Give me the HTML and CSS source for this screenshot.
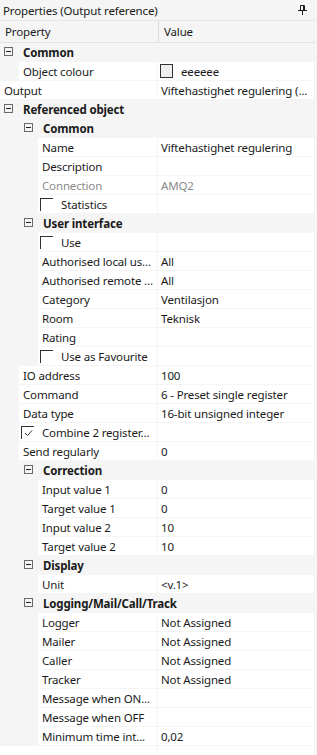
FILE: index.html
```html
<!DOCTYPE html>
<html>
<head>
<meta charset="utf-8">
<link rel="stylesheet" href="styles.css">
</head>
<body>
<div class="panel">
  <div class="titlebar">
    <span class="title">Properties (Output reference)</span>
    <svg class="pin" width="9" height="10" viewBox="0 0 9 10"><path d="M2.5 0.5h4v5h-4z M5.5 0.5v5" fill="none" stroke="#1e1e1e" stroke-width="1"/><path d="M0 5.5h9M4.5 5.5v4.5" stroke="#1e1e1e" stroke-width="1"/></svg>
  </div>
  <div class="header">
    <div class="hcell hname">Property</div>
    <div class="hcell hvalue">Value</div>
  </div>
  <div class="grid">
    <div class="row cat l0"><span class="box"></span><span class="ctext">Common</span></div>
    <div class="row"><div class="name i1"><span class="lbl">Object colour</span></div><div class="value"><span class="swatch"></span><span class="sw-text">eeeeee</span></div></div>
    <div class="row"><div class="name i0"><span class="lbl">Output</span></div><div class="value">Viftehastighet regulering (...</div></div>
    <div class="row cat l0"><span class="box"></span><span class="ctext">Referenced object</span></div>
    <div class="row cat l1"><span class="box"></span><span class="ctext">Common</span></div>
    <div class="row"><div class="name i2"><span class="lbl">Name</span></div><div class="value">Viftehastighet regulering</div></div>
    <div class="row"><div class="name i2"><span class="lbl">Description</span></div><div class="value"></div></div>
    <div class="row"><div class="name i2"><span class="lbl dis">Connection</span></div><div class="value dis">AMQ2</div></div>
    <div class="row"><div class="name i2"><span class="lbl chk"><span class="cb"></span>Statistics</span></div><div class="value"></div></div>
    <div class="row cat l1"><span class="box"></span><span class="ctext">User interface</span></div>
    <div class="row"><div class="name i2"><span class="lbl chk"><span class="cb"></span>Use</span></div><div class="value"></div></div>
    <div class="row"><div class="name i2"><span class="lbl">Authorised local us...</span></div><div class="value">All</div></div>
    <div class="row"><div class="name i2"><span class="lbl">Authorised remote ...</span></div><div class="value">All</div></div>
    <div class="row"><div class="name i2"><span class="lbl">Category</span></div><div class="value">Ventilasjon</div></div>
    <div class="row"><div class="name i2"><span class="lbl">Room</span></div><div class="value">Teknisk</div></div>
    <div class="row"><div class="name i2"><span class="lbl">Rating</span></div><div class="value"></div></div>
    <div class="row"><div class="name i2"><span class="lbl chk"><span class="cb"></span>Use as Favourite</span></div><div class="value"></div></div>
    <div class="row"><div class="name i1"><span class="lbl">IO address</span></div><div class="value">100</div></div>
    <div class="row"><div class="name i1"><span class="lbl">Command</span></div><div class="value">6 - Preset single register</div></div>
    <div class="row"><div class="name i1"><span class="lbl">Data type</span></div><div class="value">16-bit unsigned integer</div></div>
    <div class="row"><div class="name i1"><span class="lbl chk"><span class="cb checked"><svg width="9" height="8" viewBox="0 0 9 8"><path d="M1 4l2.5 2.5L8 1.5" fill="none" stroke="#333" stroke-width="1"/></svg></span>Combine 2 register...</span></div><div class="value"></div></div>
    <div class="row"><div class="name i1"><span class="lbl">Send regularly</span></div><div class="value">0</div></div>
    <div class="row cat l1"><span class="box"></span><span class="ctext">Correction</span></div>
    <div class="row"><div class="name i2"><span class="lbl">Input value 1</span></div><div class="value">0</div></div>
    <div class="row"><div class="name i2"><span class="lbl">Target value 1</span></div><div class="value">0</div></div>
    <div class="row"><div class="name i2"><span class="lbl">Input value 2</span></div><div class="value">10</div></div>
    <div class="row"><div class="name i2"><span class="lbl">Target value 2</span></div><div class="value">10</div></div>
    <div class="row cat l1"><span class="box"></span><span class="ctext">Display</span></div>
    <div class="row"><div class="name i2"><span class="lbl">Unit</span></div><div class="value">&lt;v.1&gt;</div></div>
    <div class="row cat l1"><span class="box"></span><span class="ctext">Logging/Mail/Call/Track</span></div>
    <div class="row"><div class="name i2"><span class="lbl">Logger</span></div><div class="value">Not Assigned</div></div>
    <div class="row"><div class="name i2"><span class="lbl">Mailer</span></div><div class="value">Not Assigned</div></div>
    <div class="row"><div class="name i2"><span class="lbl">Caller</span></div><div class="value">Not Assigned</div></div>
    <div class="row"><div class="name i2"><span class="lbl">Tracker</span></div><div class="value">Not Assigned</div></div>
    <div class="row"><div class="name i2"><span class="lbl">Message when ON...</span></div><div class="value"></div></div>
    <div class="row"><div class="name i2"><span class="lbl">Message when OFF</span></div><div class="value"></div></div>
    <div class="row"><div class="name i2"><span class="lbl">Minimum time int...</span></div><div class="value">0,02</div></div>
    <div class="row"><div class="name i0"><span class="lbl"></span></div><div class="value"></div></div>
  </div>
</div>
</body>
</html>
```
FILE: styles.css
```css
html, body {
  margin: 0;
  padding: 0;
  background: #f5f5f5;
  overflow: hidden;
}
.panel {
  width: 317px;
  height: 755px;
  overflow: hidden;
  font-family: "Noto Sans", "Open Sans", sans-serif;
  font-size: 11.5px;
  letter-spacing: -0.15px;
  color: #1a1a1a;
  background: #f5f5f5;
}
.titlebar {
  height: 20px;
  display: flex;
  align-items: center;
  justify-content: space-between;
  padding: 0 10px 0 3px;
}
.title { white-space: nowrap; }
.pin { display: block; }
.header {
  height: 21px;
  display: flex;
  border-top: 1px solid #e6e6e6;
  border-bottom: 1px solid #e3e3e3;
  margin-right: 2px;
}
.hcell {
  display: flex;
  align-items: center;
  white-space: nowrap;
}
.hname {
  width: 153px;
  padding-left: 5px;
  border-right: 1px solid #dcdcdc;
}
.hvalue {
  padding-left: 5px;
}
.grid {
  display: flex;
  flex-direction: column;
  gap: 1px;
}
.row {
  height: 18px;
  display: flex;
  white-space: nowrap;
}
.name {
  width: 157px;
  display: flex;
  flex-shrink: 0;
  overflow: hidden;
}
.name.i0 { padding-left: 0; }
.name.i1 { padding-left: 19px; width: 138px; }
.name.i2 { padding-left: 38px; width: 119px; }
.lbl {
  flex: 1;
  background: #fff;
  padding-left: 4px;
  display: flex;
  align-items: center;
  overflow: hidden;
}
.lbl.chk { padding-left: 2px; }
.dis { color: #8a8a8a; }
.value {
  width: 153px;
  margin-left: 1px;
  padding-left: 3px;
  background: #fff;
  display: flex;
  align-items: center;
  overflow: hidden;
}
.cat {
  align-items: center;
  font-weight: bold;
}
.cat.l0 { padding-left: 4px; }
.cat.l1 { padding-left: 24px; }
.box {
  width: 7px;
  height: 7px;
  border: 1px solid #6a6a6a;
  position: relative;
  flex-shrink: 0;
  margin-right: 10px;
  margin-top: -1px;
}
.box::after {
  content: "";
  position: absolute;
  left: 1px;
  top: 3px;
  width: 5px;
  height: 1px;
  background: #222;
}
.cb {
  width: 12px;
  height: 12px;
  border-top: 1px solid #333;
  border-left: 1px solid #333;
  margin-right: 8px;
  flex-shrink: 0;
  display: flex;
  align-items: center;
  justify-content: center;
}
.swatch {
  width: 11px;
  height: 12px;
  border: 1px solid #333;
  background: #eeeeee;
  margin-left: -1px;
  margin-right: 8px;
  flex-shrink: 0;
}
```
